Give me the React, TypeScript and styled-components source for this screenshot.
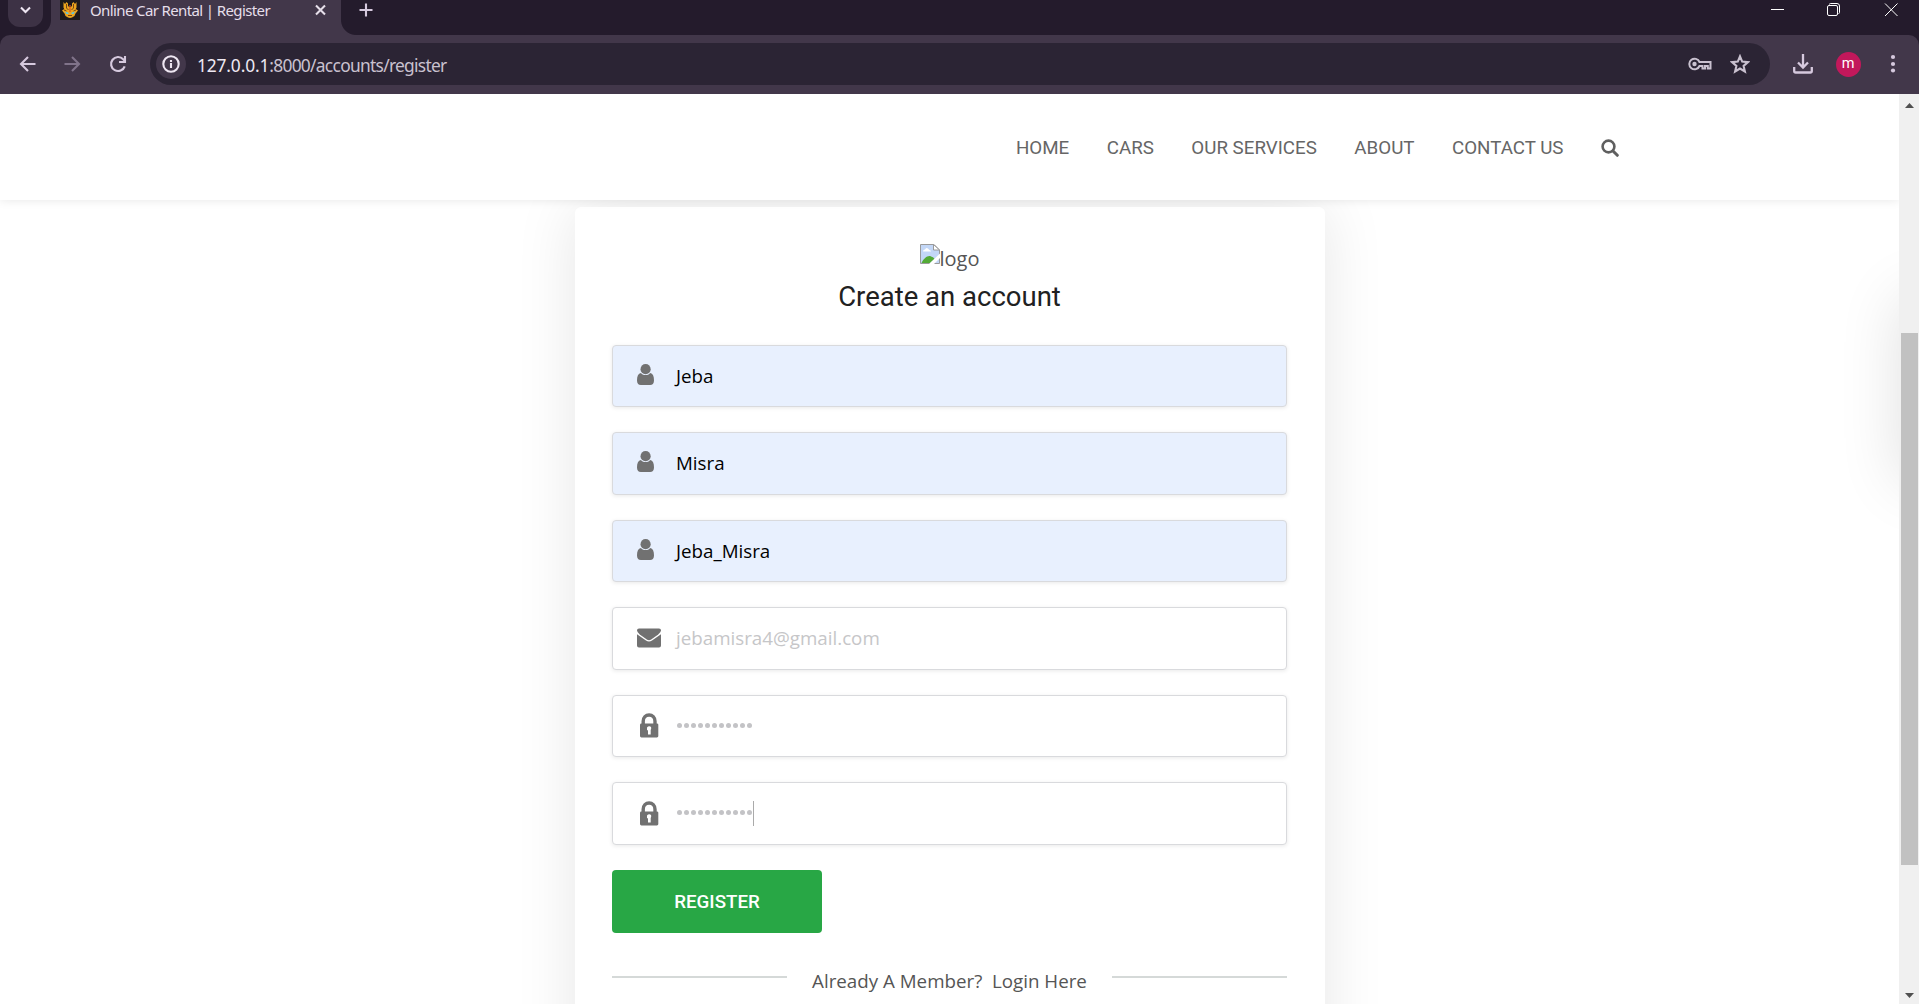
import React from "react";
import styled, { createGlobalStyle, css } from "styled-components";

const GlobalStyle = createGlobalStyle`
  * { box-sizing: border-box; }
  html, body { margin: 0; padding: 0; overflow: hidden; }
  body { background: #fff; font-family: "Open Sans", "Noto Sans", sans-serif; }
`;

const Browser = styled.div`
  width: 1919px;
  height: 1004px;
  display: flex;
  flex-direction: column;
  overflow: hidden;
`;

/* ---------- Browser chrome ---------- */
const TabStrip = styled.div`
  flex: none;
  height: 35px;
  display: flex;
  align-items: flex-start;
  background: #241b2c;
`;

const TabSearch = styled.div`
  width: 35px;
  height: 27px;
  margin-left: 8px;
  border-radius: 0 0 12px 12px;
  background: #3d3245;
  display: flex;
  justify-content: center;
`;

const Tab = styled.div`
  position: relative;
  width: 290px;
  height: 35px;
  margin-left: 8px;
  padding: 0 14px 14px 9px;
  display: flex;
  align-items: flex-start;
  background: #42374a;
  &::before,
  &::after {
    content: "";
    position: absolute;
    bottom: 0;
    width: 15px;
    height: 15px;
  }
  &::before {
    left: -15px;
    background: radial-gradient(circle at 0 0, transparent 14.5px, #42374a 15.5px);
  }
  &::after {
    right: -15px;
    background: radial-gradient(circle at 100% 0, transparent 14.5px, #42374a 15.5px);
  }
`;

const TabTitle = styled.span`
  margin-left: 10px;
  flex: 1;
  font: 400 15px/20px "Noto Sans", sans-serif;
  letter-spacing: -0.62px;
  color: #e6dfea;
  white-space: nowrap;
`;

const NewTab = styled.div`
  margin-left: 18px;
`;

const WindowControls = styled.div`
  margin-left: auto;
  display: flex;
`;

const Toolbar = styled.div`
  flex: none;
  height: 59px;
  background: #241b2c;
`;

const ToolbarInner = styled.div`
  height: 100%;
  display: flex;
  align-items: center;
  padding: 0 10px 1px 12px;
  border-radius: 10px 10px 0 0;
  background: #42374a;
`;

const ToolGlyph = styled.div<{ $w: number }>`
  flex: none;
  width: ${(p) => p.$w}px;
  display: flex;
  justify-content: center;
`;

const Omnibox = styled.div`
  flex: none;
  width: 1620px;
  height: 42px;
  margin-left: 11px;
  padding: 0 20px 0 6px;
  display: flex;
  align-items: center;
  border-radius: 21px;
  background: #2b2434;
`;

const InfoBadge = styled.div`
  width: 30px;
  height: 30px;
  border-radius: 50%;
  background: #42374a;
  display: flex;
  align-items: center;
  justify-content: center;
`;

const Url = styled.span`
  flex: 1;
  margin-left: 11px;
  padding-top: 1px;
  font: 400 17.4px/24px "Noto Sans", sans-serif;
  letter-spacing: -0.72px;
  color: #c9c1cf;
  white-space: nowrap;
`;

const UrlHost = styled.span`
  letter-spacing: -0.16px;
  color: #eee8f2;
`;

const StarIcon = styled.svg`
  margin-left: 18px;
`;

const Avatar = styled.div`
  width: 25px;
  height: 25px;
  border-radius: 50%;
  background: #c2185b;
  color: #fff;
  font: 400 14.5px/23px Roboto, sans-serif;
  text-align: center;
`;

/* ---------- Page ---------- */
const Viewport = styled.div`
  flex: 1;
  min-height: 0;
  display: flex;
`;

const Page = styled.div`
  position: relative;
  width: 1899px;
  overflow: hidden;
  display: flex;
  flex-direction: column;
  background: #fff;
`;

const SiteHeader = styled.header`
  position: relative;
  z-index: 2;
  flex: none;
  height: 106px;
  padding: 2px 280px 0 0;
  display: flex;
  align-items: center;
  justify-content: flex-end;
  gap: 37.5px;
  background: #fff;
  box-shadow: 0 0 10px rgba(0, 0, 0, 0.1);
`;

const NavLink = styled.a`
  font: 400 18.75px/28px Roboto, sans-serif;
  color: #666;
  white-space: nowrap;
`;

const PanelShadow = styled.div`
  position: absolute;
  top: 203px;
  left: 1899px;
  width: 375px;
  height: 186px;
  box-shadow: 0 0 62px rgba(0, 0, 0, 0.12);
`;

const Card = styled.main`
  flex: none;
  width: 750px;
  height: 900px;
  margin: 7px 0 0 575px;
  padding: 37px 38px 0 37px;
  border-radius: 6px;
  background: #fff;
  box-shadow: 0 0 62px rgba(0, 0, 0, 0.1);
  display: flex;
  flex-direction: column;
`;

const BrokenLogo = styled.div`
  height: 34px;
  display: flex;
  justify-content: center;
  align-items: flex-start;
  font: 400 20px/29px "Open Sans", sans-serif;
  color: #555;
`;

const Title = styled.h3`
  margin: 0 0 29.5px;
  font: 400 27.5px/37px Roboto, sans-serif;
  color: #212121;
  text-align: center;
`;

const Fields = styled.div`
  display: flex;
  flex-direction: column;
  gap: 25px;
`;

const Field = styled.div<{ $filled?: boolean }>`
  height: 62.5px;
  padding-left: 24px;
  display: flex;
  align-items: center;
  border: 1px solid #d9dadd;
  border-radius: 4px;
  background: ${(p) => (p.$filled ? "#e8f0fe" : "#fff")};
  box-shadow: 0 1px 4px rgba(0, 0, 0, 0.09);
`;

const FieldIcon = styled.div<{ $raised?: boolean }>`
  width: 39px;
  height: 26px;
  padding-bottom: ${(p) => (p.$raised ? 3 : 0)}px;
  display: flex;
  align-items: center;
`;

const FieldValue = styled.span<{ $muted?: boolean }>`
  font: 400 18.75px/28px "Open Sans", sans-serif;
  color: ${(p) => (p.$muted ? "#c6c6c8" : "#000")};
`;

const Dots = styled.div`
  display: flex;
  gap: 2px;
  padding: 0 0 1px 1px;
`;

const Dot = styled.i`
  width: 5px;
  height: 5px;
  border-radius: 50%;
  background: #c3c3c6;
`;

const Caret = styled.i<{ $on?: boolean }>`
  width: 1px;
  height: 25px;
  margin-left: 1px;
  ${(p) =>
    p.$on &&
    css`
      background: #aaa;
    `}
`;

const RegisterButton = styled.button`
  width: 210px;
  height: 63px;
  margin: 25.5px 0 0;
  padding: 0;
  border: 0;
  border-radius: 4px;
  background: #28a745;
  color: #fff;
  font: 500 18.75px/28px Roboto, sans-serif;
`;

const MemberRow = styled.div`
  margin-top: 33px;
  display: flex;
  align-items: flex-start;
  justify-content: space-between;
  font: 400 18.75px/30px "Open Sans", sans-serif;
  color: #555;
  white-space: pre;
`;

const Rule = styled.div`
  width: 175px;
  height: 2px;
  margin-top: 10px;
  background: #d5d9d8;
`;

const Scrollbar = styled.div`
  width: 20px;
  padding: 9px 1px 6px 2px;
  display: flex;
  flex-direction: column;
  align-items: center;
  background: #f0f0f0;
`;

const Thumb = styled.div`
  width: 17px;
  height: 532px;
  margin-top: 225px;
  margin-bottom: auto;
  background: #c1c1c1;
`;

/* ---------- Icons ---------- */
const UserIcon = () => (
  <svg width="17" height="21" viewBox="0 0 17 21" fill="#717171">
    <ellipse cx="8.6" cy="5.2" rx="5.1" ry="5.1" />
    <path d="M3.9 8.9C1.2 9.5 0 12 0 16.5C0 19.5 1.6 21 3.8 21H13.2C15.4 21 17 19.5 17 16.5C17 12 15.9 9.5 13.2 8.9C11.9 10.6 10.4 11.1 8.6 11.1S5.2 10.6 3.9 8.9Z" />
  </svg>
);

const MailIcon = () => (
  <svg width="24" height="20" viewBox="0 0 24 20" fill="#717171">
    <path d="M2 .5H22Q24 .7 24 2.3Q24 4.5 21.2 6.6L14.2 11.5Q12 13 9.8 11.5L2.8 6.6Q0 4.5 0 2.3Q0 .7 2 .5Z" />
    <path d="M0 6.2L9 12.6Q12 14.6 15 12.6L24 6.2V17.4Q24 19.5 22 19.5H2Q0 19.5 0 17.4Z" />
  </svg>
);

const LockIcon = () => (
  <svg width="24" height="25" viewBox="0 0 24 25">
    <path d="M6.2 11V8.3C6.2 4.6 8.8 2 12.1 2S18 4.6 18 8.3V11" fill="none" stroke="#717171" strokeWidth="3.4" />
    <rect x="3" y="10.4" width="18.3" height="14" rx="1.4" fill="#717171" />
    <path d="M12.3 13.3C13.9 13.3 14.4 14.4 14.2 15.6L13.7 17V21.4H11V17.2H10V14.6Q11 13.3 12.3 13.3Z" fill="#fff" />
  </svg>
);

const BrokenImage = () => (
  <svg width="20" height="20" viewBox="0 0 20 20">
    <path d="M.5 .5H14L19.5 6V19.5H.5Z" fill="#c3d7f7" stroke="#9a9a9a" />
    <path d="M13.5 .5V6H19.5Z" fill="#fff" stroke="#9a9a9a" />
    <path d="M3 7.5Q3 5.5 5 5.5Q6 3 8 4.5Q9 5.5 9.5 6Q11 6 11 7.5Z" fill="#fff" />
    <path d="M1.5 19C4 14 8 11 11 12.5C13 13 14 14 14.500 15L10 19Z" fill="#53aa36" />
    <path d="M9 20L20 9.5V14L14 20Z" fill="#fff" />
  </svg>
);

const Favicon = () => (
  <svg width="20" height="20" viewBox="0 0 20 20">
    <rect width="20" height="20" fill="#1d1a1c" />
    <path d="M3.500 2L5 4L6.500 2L8 3.500V6L9.300 7H10.700L12 6V3.500L13.500 2L15 4L16.500 2V7.500L15.800 9L18 10.500L15.500 13.500L14.500 16L12 17.500L10 18L8 17.500L5.500 16L4.500 13.500L2 10.500L4.200 9L3.500 7.500Z" fill="#eaa51e" />
    <path d="M6.500 4V8L8.500 10M13.500 4V8L11.500 10M4 10L6.500 11M16 10L13.500 11M8 15.500H12" fill="none" stroke="#6b3d14" strokeWidth=".9" />
    <path d="M10 5V12" stroke="#d9541e" strokeWidth="1.200" />
    <path d="M5 11.500L8.500 12.800V14H6.500ZM15 11.500L11.500 12.800V14H13.500Z" fill="#58c7ea" />
  </svg>
);

const line = { fill: "none", stroke: "#d6c9de", strokeWidth: 2.1 };

export default function App() {
  return (
    <Browser>
      <GlobalStyle />
      <TabStrip>
        <TabSearch>
          <svg width="35" height="27"><path d="M13 7.500L17.500 12L22 7.500" {...line} stroke="#eee6f2" /></svg>
        </TabSearch>
        <Tab>
          <Favicon />
          <TabTitle>Online Car Rental | Register</TabTitle>
          <svg width="13" height="20"><path d="M2 5.500L11 14.500M11 5.500L2 14.500" {...line} stroke="#e6dfea" /></svg>
        </Tab>
        <NewTab>
          <svg width="14" height="20"><path d="M7 3.500V16.500M.5 10H13.500" {...line} /></svg>
        </NewTab>
        <WindowControls>
          <svg width="160" height="24" fill="none" stroke="#fff">
            <path d="M12 9.500H25" />
            <path d="M70.500 4.500V4Q70.500 3.500 71.500 3.500H78Q80.500 3.500 80.500 6V12.500Q80.500 13.500 79.500 13.500" />
            <rect x="68.500" y="5.500" width="10" height="10" rx="1.500" />
            <path d="M126 3.500L138.500 16M138.500 3.500L126 16" />
          </svg>
        </WindowControls>
      </TabStrip>
      <Toolbar>
        <ToolbarInner>
          <ToolGlyph $w={31}>
            <svg width="18" height="18"><path d="M16.500 9H2.500M9 2L2 9L9 16" {...line} /></svg>
          </ToolGlyph>
          <ToolGlyph $w={58}>
            <svg width="18" height="18"><path d="M1.500 9H15.500M9 2L16 9L9 16" {...line} stroke="#80738a" /></svg>
          </ToolGlyph>
          <ToolGlyph $w={33}>
            <svg width="20" height="20" viewBox="0 0 20 20">
              <path d="M16.700 12.300A7 7 0 1 1 15.200 5.200L17 7" {...line} strokeWidth="2.200" />
              <path d="M17 2V8H11" {...line} />
            </svg>
          </ToolGlyph>
          <ToolGlyph $w={5} />
          <Omnibox>
            <InfoBadge>
              <svg width="18" height="18"><circle cx="9" cy="9" r="7.700" {...line} stroke="#eee6f2" /><path d="M9 8V13M9 5V7" {...line} stroke="#eee6f2" /></svg>
            </InfoBadge>
            <Url><UrlHost>127.0.0.1</UrlHost>:8000/accounts/register</Url>
            <svg width="24" height="16" viewBox="0 0 24 16">
              <path d="M11.500 6H22.500V12.500H19.800V10H17V12.500H14.500V10H11.500A5.300 5.300 0 1 1 11.500 6Z" fill="none" stroke="#c9c1cf" strokeWidth="2" />
              <circle cx="6.500" cy="8" r="2.200" fill="#c9c1cf" />
            </svg>
            <StarIcon width="20" height="20" viewBox="0 0 20 20">
              <path d="M10 2.300L12.200 7.600L17.900 8.100L13.600 11.900L14.900 17.500L10 14.500L5.100 17.500L6.400 11.900L2.100 8.100L7.800 7.600Z" fill="none" stroke="#c9c1cf" strokeWidth="2.100" />
            </StarIcon>
          </Omnibox>
          <ToolGlyph $w={65}>
            <svg width="20" height="20"><path d="M10 0V13M5 8.500L10 13.500L15 8.500M1.200 13V17Q1.200 18.500 2.700 18.500H17.300Q18.800 18.500 18.800 17V13" {...line} strokeWidth="2.300" /></svg>
          </ToolGlyph>
          <ToolGlyph $w={26}><Avatar>m</Avatar></ToolGlyph>
          <ToolGlyph $w={64}>
            <svg width="6" height="20" fill="#d6c9de"><circle cx="3" cy="3" r="2.100" /><circle cx="3" cy="10" r="2.100" /><circle cx="3" cy="16.500" r="2.100" /></svg>
          </ToolGlyph>
        </ToolbarInner>
      </Toolbar>
      <Viewport>
        <Page>
          <SiteHeader>
            {["HOME", "CARS", "OUR SERVICES", "ABOUT", "CONTACT US"].map((t) => (
              <NavLink key={t}>{t}</NavLink>
            ))}
            <svg width="18" height="18" viewBox="0 0 18 18" fill="none" stroke="#5f5f5f">
              <circle cx="7.500" cy="7.500" r="5.900" strokeWidth="2.600" />
              <path d="M12 12L16.300 16.300" strokeWidth="3" strokeLinecap="round" />
            </svg>
          </SiteHeader>
          <PanelShadow />
          <Card>
            <BrokenLogo><BrokenImage />logo</BrokenLogo>
            <Title>Create an account</Title>
            <Fields>
              {["Jeba", "Misra", "Jeba_Misra"].map((v) => (
                <Field key={v} $filled>
                  <FieldIcon $raised><UserIcon /></FieldIcon>
                  <FieldValue>{v}</FieldValue>
                </Field>
              ))}
              <Field>
                <FieldIcon><MailIcon /></FieldIcon>
                <FieldValue $muted>jebamisra4@gmail.com</FieldValue>
              </Field>
              {[false, true].map((focused) => (
                <Field key={String(focused)}>
                  <FieldIcon><LockIcon /></FieldIcon>
                  <Dots>{Array.from({ length: 11 }, (_, i) => <Dot key={i} />)}</Dots>
                  <Caret $on={focused} />
                </Field>
              ))}
            </Fields>
            <RegisterButton>REGISTER</RegisterButton>
            <MemberRow>
              <Rule />
              <span>Already A Member?  Login Here</span>
              <Rule />
            </MemberRow>
          </Card>
        </Page>
        <Scrollbar>
          <svg width="9" height="5"><path d="M0 5L4.500 0L9 5Z" fill="#505050" /></svg>
          <Thumb />
          <svg width="9" height="5"><path d="M0 0L4.500 5L9 0Z" fill="#505050" /></svg>
        </Scrollbar>
      </Viewport>
    </Browser>
  );
}
